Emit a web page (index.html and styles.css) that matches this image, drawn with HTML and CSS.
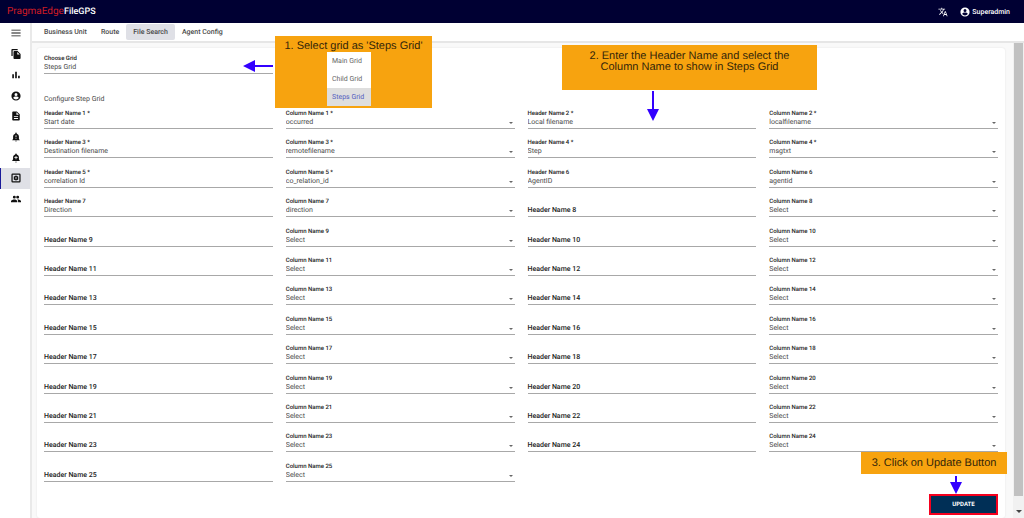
FILE: index.html
```html
<!DOCTYPE html>
<html lang="en">
<head>
  <meta charset="UTF-8">
  <meta name="viewport" content="width=device-width, initial-scale=1.0">
  <title>FileGPS - File Search</title>
  <link rel="stylesheet" href="styles.css">
</head>
<body>
  <!-- Header -->
  <header class="topbar">
    <h1 class="brand"><span class="brand-logo">PragmaEdge</span> FileGPS</h1>
    <div class="topbar-right">
      <button class="icon-btn" aria-label="Language">
        <svg viewBox="0 0 24 24"><path d="M12.87 15.07l-2.54-2.51.03-.03A17.5 17.5 0 0 0 14.07 6H17V4h-7V2H8v2H1v2h11.17C11.5 7.92 10.44 9.75 9 11.35 8.07 10.32 7.3 9.19 6.69 8h-2c.73 1.63 1.73 3.17 2.98 4.56l-5.09 5.02L4 19l5-5 3.11 3.11.76-2.04zM18.5 10h-2L12 22h2l1.12-3h4.75L21 22h2l-4.5-12zm-2.62 7l1.62-4.33L19.12 17h-3.24z"/></svg>
      </button>
      <button class="user-btn">
        <svg viewBox="0 0 24 24"><path d="M12 1a11 11 0 1 0 0 22 11 11 0 0 0 0-22zm0 4a3.6 3.6 0 1 1 0 7.200a3.600 3.600 0 0 1 0-7.200zm0 15.200a7.900 7.900 0 0 1-6.600-3.500c0-2.200 4.400-3.400 6.600-3.400s6.600 1.200 6.600 3.400a7.900 7.900 0 0 1-6.600 3.500z"/></svg>
        Superadmin
      </button>
    </div>
  </header>

  <div class="layout">
    <!-- Side Menu -->
    <nav class="sidebar" aria-label="Main">
      <a href="#" aria-label="Menu"><svg viewBox="0 0 24 24"><path d="M1 4h22v2H1zM1 11h22v2H1zM1 18h22v2H1z"/></svg></a>
      <a href="#" aria-label="Files"><svg viewBox="0 0 24 24"><path d="M16 0H3C1.900 0 1 .9 1 2v15h3V3h12V0zm0 5l7 7v10c0 1.100-.9 2-2 2H8c-1.100 0-2-.9-2-2V7c0-1.100.9-2 2-2h8zm-1 8h6l-6-6v6z"/></svg></a>
      <a href="#" aria-label="Reports"><svg viewBox="0 0 24 24"><path d="M3 10h4v10H3zM10 4h4v16h-4zM17 14h4v6h-4z"/></svg></a>
      <a href="#" aria-label="Partners"><svg viewBox="0 0 24 24"><path d="M12 1a11 11 0 1 0 0 22 11 11 0 0 0 0-22zm0 4a3.600 3.600 0 1 1 0 7.200a3.600 3.600 0 0 1 0-7.200zm0 15.200a7.900 7.900 0 0 1-6.600-3.500c0-2.200 4.400-3.400 6.600-3.400s6.600 1.200 6.600 3.400a7.900 7.900 0 0 1-6.600 3.500z"/></svg></a>
      <a href="#" aria-label="Documents"><svg viewBox="0 0 24 24"><path d="M14 1H5C3.800 1 3 1.900 3 3v18c0 1.100.8 2 2 2h14c1.100 0 2-.9 2-2V8l-7-7zm3 18H7v-2h10v2zm0-5H7v-2h10v2zm-4-5V3l6 6h-6z"/></svg></a>
      <a href="#" aria-label="Alerts"><svg viewBox="0 0 24 24"><path d="M12 23c1.100 0 2-.9 2-2h-4c0 1.100.9 2 2 2zm7-6v-6c0-3.500-2-6.200-5.300-7V3a1.700 1.700 0 0 0-3.400 0v1C7 4.800 5 7.500 5 11v6l-2 2v1h18v-1l-2-2zm-6-1h-2v-2h2v2zm0-4h-2V8h2v4z"/></svg></a>
      <a href="#" aria-label="Add alert"><svg viewBox="0 0 24 24"><path d="M10 21a2 2 0 0 0 4 0h-4zm10-4l-1-2v-5c0-3.200-2.200-5.800-5.200-6.600V2.800a1.800 1.800 0 0 0-3.600 0v.6C7.200 4.200 5 6.800 5 10v5l-2 3v1h18v-1l-1-1zm-4-5h-3v3h-2v-3H8v-2h3V7h2v3h3v2z"/></svg></a>
      <a href="#" class="active" aria-label="Settings"><svg viewBox="0 0 24 24"><path fill-rule="evenodd" d="M4 1h16a3 3 0 0 1 3 3v16a3 3 0 0 1-3 3H4a3 3 0 0 1-3-3V4a3 3 0 0 1 3-3zm0 3v16h16V4H4zm7 2h2l1 2 2-.5 1.500 1.500-.5 2 1 1-1 1 .5 2L16 16.500l-2-.5-1 2h-2l-1-2-2 .5L6.500 15l.5-2-1-1 1-1-.5-2L8 7.500l2 .5 1-2zm1 4a2 2 0 1 0 0 4 2 2 0 0 0 0-4z"/></svg></a>
      <a href="#" aria-label="Users"><svg viewBox="0 0 24 24"><path d="M16 11a3.500 3.500 0 1 0 0-7 3.500 3.500 0 0 0 0 7zm-8 0a3.500 3.500 0 1 0 0-7 3.500 3.500 0 0 0 0 7zm0 2c-2.700 0-8 1.300-8 4v3h15v-3c0-2.700-4.300-4-7-4zm8 0l-1 .1c1.200.9 2 2 2 3.900v3h7v-3c0-2.700-5.300-4-8-4z"/></svg></a>
    </nav>

    <div class="page">
      <nav class="tabs" aria-label="Settings">
        <a href="#">Business Unit</a>
        <a href="#">Route</a>
        <a href="#" class="active">File Search</a>
        <a href="#">Agent Config</a>
      </nav>

      <div class="scroll-area">
        <form class="card">
          <div class="form-grid">
            <div class="field">
              <label for="choose-grid">Choose Grid</label>
              <select id="choose-grid">
                <option>Main Grid</option>
                <option>Child Grid</option>
                <option selected>Steps Grid</option>
              </select>
            </div>
          </div>
          <h2>Configure Step Grid</h2>
          <div class="form-grid rows" id="rows"></div>
          <div class="actions">
            <button type="button" class="update-btn">UPDATE</button>
          </div>
        </form>
        <div class="scrollbar">
          <div class="scroll-thumb"></div>
          <div class="scroll-down"></div>
        </div>
      </div>
    </div>
  </div>

  <!-- Step Notes -->
  <div class="note note-grid">
    1. Select grid as 'Steps Grid'
    <div class="menu">
      <button>Main Grid</button>
      <button>Child Grid</button>
      <button class="active">Steps Grid</button>
    </div>
  </div>
  <div class="note note-names">2. Enter the Header Name and select the Column Name to show in Steps Grid</div>
  <div class="note note-update">3. Click on Update Button</div>

  <svg class="arrow arrow-left" viewBox="0 0 30 12"><path d="M0 6L12 0v5h18v2H12v5z"/></svg>
  <svg class="arrow arrow-names" viewBox="0 0 12 30"><path d="M6 30L0 18h5V0h2v18h5z"/></svg>
  <svg class="arrow arrow-update" viewBox="0 0 12 18"><path d="M6 18L0 6h5V0h2v6h5z"/></svg>

  <script>
    const saved = [
      ['Start date', 'occurred'],
      ['Local filename', 'localfilename'],
      ['Destination filename', 'remotefilename'],
      ['Step', 'msgtxt'],
      ['correlation Id', 'co_relation_id'],
      ['AgentID', 'agentid'],
      ['Direction', 'direction']
    ];
    const required = 5;
    const total = 25;
    const rows = document.getElementById('rows');

    for (let i = 1; i <= total; i++) {
      const [header, column] = saved[i - 1] || ['', 'Select'];
      const star = i <= required ? ' *' : '';
      rows.insertAdjacentHTML('beforeend', `
        <div class="field${header ? '' : ' empty'}">
          <label for="header-${i}">Header Name ${i}${star}</label>
          <input type="text" id="header-${i}" value="${header}">
        </div>
        <div class="field select">
          <label for="column-${i}">Column Name ${i}${star}</label>
          <select id="column-${i}"><option>${column}</option></select>
        </div>`);
    }
  </script>
</body>
</html>
```
FILE: styles.css
```css
/* General Reset */
* {
  margin: 0;
  padding: 0;
  box-sizing: border-box;
}

body {
  font-family: Roboto, Arial, sans-serif;
  font-size: 7px;
  text-rendering: geometricPrecision;
  color: #4a4a4a;
  background-color: #fff;
  height: 100vh;
  display: flex;
  flex-direction: column;
  overflow: hidden;
}

a {
  color: inherit;
  text-decoration: none;
}

button, input, select {
  font: inherit;
  text-rendering: inherit;
  color: inherit;
  background: none;
  border: 0;
  border-radius: 0;
  outline: 0;
}

svg {
  display: block;
  fill: currentColor;
}

/* Header */
.topbar {
  display: flex;
  align-items: center;
  justify-content: space-between;
  height: 23px;
  padding: 0 14px 0 7px;
  background-color: #000033;
  color: #fff;
}

.brand {
  display: flex;
  align-items: center;
  font-size: 9px;
  font-weight: 500;
}

.brand-logo {
  font-size: 10px;
  font-weight: 400;
  color: #d01c24;
}

.topbar-right {
  display: flex;
  align-items: center;
  gap: 12px;
}

.topbar-right svg {
  width: 10px;
  height: 10px;
}

.user-btn {
  display: flex;
  align-items: center;
  gap: 2px;
  font-weight: 500;
}

/* Layout */
.layout {
  flex: 1;
  display: flex;
  min-height: 0;
}

.sidebar {
  display: grid;
  grid-auto-rows: 1fr;
  width: 30px;
  height: 36vh;
  color: #111;
}

.sidebar a {
  display: flex;
  align-items: center;
  justify-content: center;
  border-left: 1px solid transparent;
}

.sidebar a.active {
  background-color: #dfe0e6;
  border-left-color: #1a1a9a;
}

.sidebar svg {
  width: 10px;
  height: 10px;
}

.page {
  flex: 1;
  display: flex;
  flex-direction: column;
  min-width: 0;
  border-left: 2px solid #e9e9e9;
}

/* Tabs */
.tabs {
  display: flex;
  height: 20px;
  padding: 1px 5px;
  border-bottom: 2px solid #e6e6e6;
  font-weight: 500;
}

.tabs a {
  display: flex;
  align-items: center;
  padding: 0 7px;
}

.tabs a.active {
  background-color: #dfe0e6;
  border-radius: 2px;
}

/* Card */
.scroll-area {
  flex: 1;
  display: flex;
  min-height: 0;
  background-color: #f9f9f9;
}

.card {
  flex: 1;
  display: flex;
  flex-direction: column;
  margin: 5px 8px 0 5px;
  padding: 6px 7px 3px;
  background-color: #fff;
  border-radius: 3px;
  box-shadow: 0 0 2px rgba(0, 0, 0, 0.1);
}

.card h2 {
  margin: 20px 0 5px;
  font-size: 7px;
  font-weight: 400;
  line-height: 10px;
}

.form-grid {
  display: grid;
  grid-template-columns: repeat(4, 1fr);
  column-gap: 13px;
}

.rows {
  flex: 1;
  align-content: space-between;
}

/* Fields */
.field {
  display: grid;
  grid-template-columns: 1fr;
  grid-template-rows: 9px 10px;
  height: 20px;
  border-bottom: 1px solid #a8a8a8;
}

.field label {
  grid-area: 1 / 1;
  font-size: 6px;
  font-weight: 500;
  line-height: 10px;
  color: #222;
}

.field input,
.field select {
  grid-area: 2 / 1;
  width: 100%;
  min-width: 0;
  height: 9px;
  line-height: 9px;
  appearance: none;
}

.field.empty label {
  grid-area: 2 / 1;
  font-size: 7px;
  line-height: 9px;
}

.field.select::after {
  content: "";
  grid-area: 2 / 1;
  align-self: center;
  justify-self: end;
  margin-right: 2px;
  border: 2px solid transparent;
  border-top-color: #666;
  border-bottom: 0;
  pointer-events: none;
}

/* Update */
.actions {
  display: flex;
  justify-content: flex-end;
  margin-top: 12px;
}

.update-btn {
  width: 69px;
  height: 21px;
  border: 2px solid #f5001e;
  background-color: #002f56;
  color: #fff;
  font-size: 6px;
  font-weight: 700;
}

/* Scrollbar */
.scrollbar {
  display: flex;
  flex-direction: column;
  align-items: center;
  width: 11px;
  background-color: #f1f1f1;
}

.scroll-thumb {
  flex: 1;
  width: 9px;
  background-color: #c1c1c1;
}

.scroll-down {
  margin: 14px 0 5px;
  border: 3px solid transparent;
  border-top-color: #444;
  border-bottom: 0;
}

/* Step Notes */
.note {
  position: absolute;
  background-color: #f7a30f;
  color: #33260a;
  font-family: "Liberation Sans", Arial, sans-serif;
  font-size: 11px;
  line-height: 11px;
  text-align: center;
}

.note-grid {
  top: 36px;
  left: 275px;
  width: 157px;
  height: 72px;
  padding-top: 5px;
}

.note-names {
  top: 45px;
  left: 562px;
  width: 255px;
  height: 45px;
  padding: 6px 24px;
}

.note-update {
  right: 17px;
  bottom: 44px;
  width: 146px;
  padding: 6px 0 5px;
}

.menu {
  display: flex;
  flex-direction: column;
  width: 44px;
  margin: 0 auto 0 52px;
  background-color: #fff;
  font-family: Roboto, Arial, sans-serif;
  font-size: 7px;
}

.menu button {
  height: 18px;
  padding-left: 5px;
  text-align: left;
  color: #666;
}

.menu button.active {
  background-color: #dedede;
  color: #5560c0;
}

.arrow {
  position: absolute;
  fill: #3300ff;
}

.arrow-left {
  top: 60px;
  left: 243px;
  width: 30px;
  height: 12px;
}

.arrow-names {
  top: 91px;
  left: 647px;
  width: 12px;
  height: 30px;
}

.arrow-update {
  right: 62px;
  bottom: 24px;
  width: 12px;
  height: 18px;
}
```
